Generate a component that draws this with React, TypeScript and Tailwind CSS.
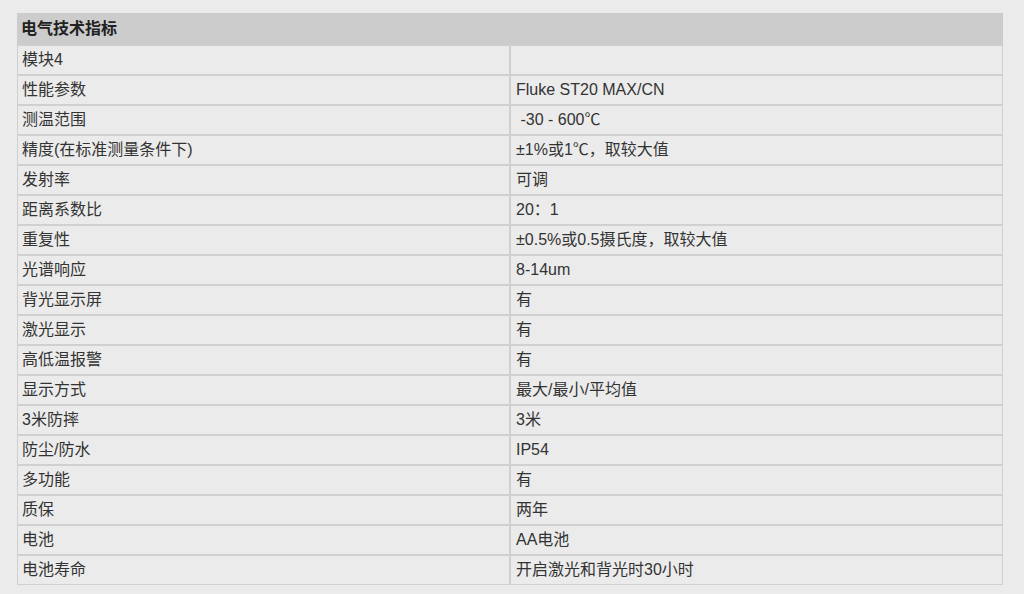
const specs: [string, string][] = [
  ['模块4', ''],
  ['性能参数', 'Fluke ST20 MAX/CN'],
  ['测温范围', ' -30 - 600℃'],
  ['精度(在标准测量条件下)', '±1%或1℃，取较大值'],
  ['发射率', '可调'],
  ['距离系数比', '20：1'],
  ['重复性', '±0.5%或0.5摄氏度，取较大值'],
  ['光谱响应', '8-14um'],
  ['背光显示屏', '有'],
  ['激光显示', '有'],
  ['高低温报警', '有'],
  ['显示方式', '最大/最小/平均值'],
  ['3米防摔', '3米'],
  ['防尘/防水', 'IP54'],
  ['多功能', '有'],
  ['质保', '两年'],
  ['电池', 'AA电池'],
  ['电池寿命', '开启激光和背光时30小时'],
];

const App = () => {
  return (
    <div className="min-h-[594px] w-[1024px] bg-[#ebebeb] pt-[13px] pl-[17px] font-['Liberation_Sans','Noto_Sans_CJK_SC',sans-serif] text-[#333333]">
      <table className="w-[986px] border-separate border-spacing-0 text-[16px] leading-[20px]">
        <thead>
          <tr>
            <th
              colSpan={2}
              className="h-[32px] bg-[#cccccc] pl-[4px] text-left align-middle text-[16px] font-bold text-[#222222]"
            >
              电气技术指标
            </th>
          </tr>
        </thead>
        <tbody>
          {specs.map(([name, value]) => (
            <tr key={name}>
              <td className="h-[30px] w-[493px] border border-[#d0d0d0] pl-[4px] align-middle whitespace-pre">
                {name}
              </td>
              <td className="h-[30px] border border-[#d0d0d0] pl-[5px] align-middle whitespace-pre">
                {value}
              </td>
            </tr>
          ))}
        </tbody>
      </table>
    </div>
  );
};

export default App;
